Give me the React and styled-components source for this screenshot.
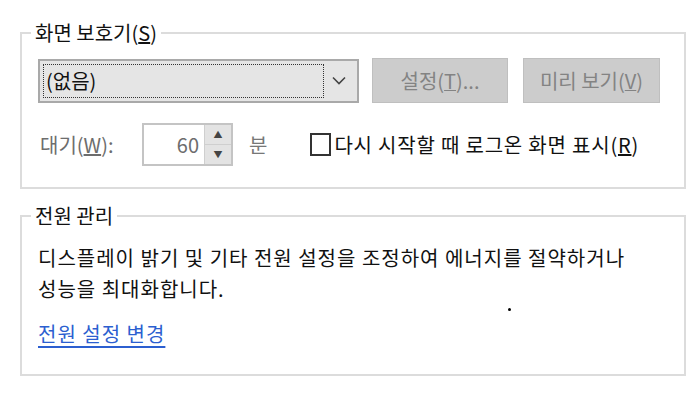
import React from "react";
import styled, { createGlobalStyle } from "styled-components";

const GlobalStyle = createGlobalStyle`
	html, body {
		margin: 0;
		padding: 0;
		background: #ffffff;
	}
	body {
		font-family: "Noto Sans CJK KR", "Noto Sans", sans-serif;
		color: #1a1a1a;
	}
`;

const Page = styled.div`
	position: relative;
	width: 700px;
	height: 400px;
	padding: 20px 0 0 20px;
	box-sizing: border-box;
`;

const Group = styled.fieldset`
	width: 666px;
	box-sizing: border-box;
	margin: 0 0 ${(p) => p.$gap || 0}px 0;
	padding: 0 0 ${(p) => p.$bottom}px 16px;
	border: 2px solid #dcdcdc;
	min-inline-size: 0;
`;

const Legend = styled.legend`
	margin-left: -7px;
	padding: 0 4px;
	font-size: 20px;
	line-height: 26px;
	color: #111;
`;

const Row = styled.div`
	display: flex;
	align-items: center;
	margin-top: ${(p) => p.$top}px;
`;

const Combo = styled.div`
	position: relative;
	width: 321px;
	height: 44px;
	box-sizing: border-box;
	border: 2px solid #a9a9a9;
	background: #e5e5e5;
	display: flex;
	align-items: center;
	padding: 3px;
`;

const ComboValue = styled.div`
	flex: 1;
	height: 100%;
	box-sizing: border-box;
	border: 1px dotted #333;
	display: flex;
	align-items: center;
	padding-left: 2px;
	font-size: 20px;
	color: #111;
`;

const Chevron = styled.div`
	width: 30px;
	display: flex;
	justify-content: center;
	align-items: center;
`;

const Button = styled.div`
	width: ${(p) => p.$w}px;
	height: 45px;
	box-sizing: border-box;
	margin-left: ${(p) => p.$left}px;
	background: #cccccc;
	border: 1px solid #bfbfbf;
	display: flex;
	align-items: center;
	justify-content: center;
	font-size: 20px;
	color: #838383;
	u {
		text-decoration-thickness: 1px;
	}
`;

const Label = styled.div`
	width: 104px;
	padding-left: 2px;
	box-sizing: border-box;
	font-size: 20px;
	color: #6d6d6d;
`;

const Spin = styled.div`
	width: 91px;
	height: 43px;
	box-sizing: border-box;
	border: 2px solid #c4c4c4;
	display: flex;
`;

const SpinValue = styled.div`
	flex: 1;
	display: flex;
	align-items: center;
	justify-content: flex-end;
	padding-right: 5px;
	font-size: 20px;
	color: #6d6d6d;
	background: #fff;
`;

const SpinButtons = styled.div`
	width: 26px;
	display: flex;
	flex-direction: column;
	background: #e3e3e3;
	border-left: 1px solid #cfcfcf;
`;

const SpinArrow = styled.div`
	flex: 1;
	display: flex;
	align-items: center;
	justify-content: center;
	font-size: 9px;
	color: #444;
	& + & {
		border-top: 1px solid #cfcfcf;
	}
`;

const Unit = styled.div`
	margin-left: 16px;
	font-size: 20px;
	color: #777;
`;

const Check = styled.div`
	display: flex;
	align-items: center;
	margin-left: 43px;
	font-size: 20px;
	letter-spacing: 0.8px;
	color: #111;
`;

const Box = styled.div`
	width: 21px;
	height: 23px;
	box-sizing: border-box;
	border: 2px solid #333;
	background: #fff;
	margin-right: 3px;
`;

const Text = styled.p`
	margin: 13px 0 0 0;
	font-size: 20px;
	line-height: 31px;
	letter-spacing: 1px;
	color: #111;
`;

const Link = styled.a`
	display: inline-block;
	margin-top: 14px;
	font-size: 20px;
	line-height: 31px;
	letter-spacing: 1px;
	color: #2c5fd0;
	text-decoration: underline;
	text-underline-offset: 4px;
`;

const Dot = styled.div`
	position: absolute;
	left: 508px;
	top: 308px;
	width: 3px;
	height: 3px;
	border-radius: 50%;
	background: #000;
`;

export default function App() {
	return (
		<Page>
			<GlobalStyle />
			<Group $bottom={21} $gap={14}>
				<Legend>
					화면 보호기(<u>S</u>)
				</Legend>
				<Row $top={12}>
					<Combo>
						<ComboValue>(없음)</ComboValue>
						<Chevron>
							<svg width="14" height="9" viewBox="0 0 14 9">
								<path d="M1 1.5 L7 7.5 L13 1.5" fill="none" stroke="#444" strokeWidth="1.6" />
							</svg>
						</Chevron>
					</Combo>
					<Button $w={136} $left={13}>
						설정(<u>T</u>)...
					</Button>
					<Button $w={137} $left={15}>
						미리 보기(<u>V</u>)
					</Button>
				</Row>
				<Row $top={20}>
					<Label>
						대기(<u>W</u>):
					</Label>
					<Spin>
						<SpinValue>60</SpinValue>
						<SpinButtons>
							<SpinArrow>▲</SpinArrow>
							<SpinArrow>▼</SpinArrow>
						</SpinButtons>
					</Spin>
					<Unit>분</Unit>
					<Check>
						<Box />
						다시 시작할 때 로그온 화면 표시(<u>R</u>)
					</Check>
				</Row>
			</Group>
			<Group $bottom={25}>
				<Legend>전원 관리</Legend>
				<Text>
					디스플레이 밝기 및 기타 전원 설정을 조정하여 에너지를 절약하거나
					<br />
					성능을 최대화합니다.
				</Text>
				<Link href="#">전원 설정 변경</Link>
			</Group>
			<Dot />
		</Page>
	);
}
